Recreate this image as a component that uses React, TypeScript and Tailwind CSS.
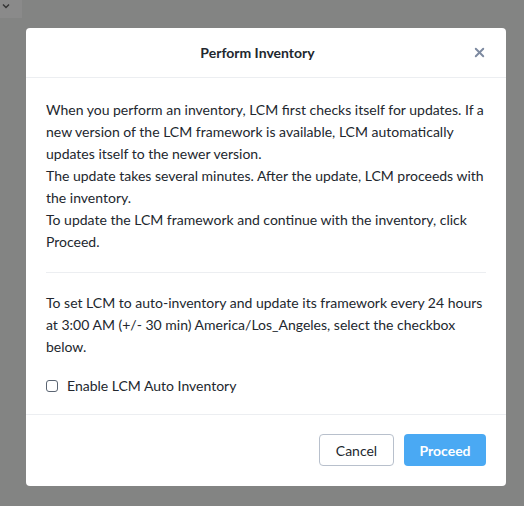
import { X } from 'lucide-react';

export default function App() {
  return (
    <div className="relative min-h-[506px] w-full bg-[#838483] pt-[28px] pl-[26px] font-['Lato','Noto_Sans',sans-serif] text-[14px] text-[#22272e]">
      {/* page behind the overlay */}
      <div className="absolute left-0 top-0 flex h-[18px] w-[22px] items-start justify-start bg-[#8a8a8a] pl-[2px]">
        <svg width="8" height="6" viewBox="0 0 8 6" className="mt-[3px]">
          <path d="M1 1.5 L4 4.5 L7 1.5" fill="none" stroke="#333" strokeWidth="1.4" />
        </svg>
      </div>

      <div className="relative w-[480px] rounded-[4px] bg-white">
        {/* header */}
        <div className="relative flex h-[50px] items-center justify-center border-b border-[#eceef1] pr-[17px]">
          <h2 className="text-[14px] font-bold text-[#22272e]">Perform Inventory</h2>
          <button type="button" className="absolute right-[19px] top-[17px] text-[#7d8aa0]" aria-label="Close">
            <X className="h-[15px] w-[15px]" strokeWidth={3} />
          </button>
        </div>

        {/* body */}
        <div className="px-[20px] pt-[21px] pb-[17px] leading-[22px]">
          <p>
            When you perform an inventory, LCM first checks itself for updates. If a new version of the LCM framework is
            available, LCM automatically updates itself to the newer version.
          </p>
          <p>The update takes several minutes. After the update, LCM proceeds with the inventory.</p>
          <p>To update the LCM framework and continue with the inventory, click Proceed.</p>

          <div className="my-[19px] border-t border-[#eceef1]" />

          <p>
            To set LCM to auto-inventory and update its framework every 24 hours at 3:00 AM (+/- 30 min)
            America/Los_Angeles, select the checkbox below.
          </p>

          <label className="mt-[17px] flex items-center gap-[9px]">
            <span className="h-[12px] w-[12px] rounded-[3px] border border-[#5b6573] bg-white" />
            <span>Enable LCM Auto Inventory</span>
          </label>
        </div>

        {/* footer */}
        <div className="flex justify-end gap-[10px] border-t border-[#eceef1] px-[20px] pt-[19px] pb-[20px]">
          <button
            type="button"
            className="h-[32px] w-[75px] rounded-[4px] border border-[#b8c0cc] bg-white text-[14px] text-[#22272e]"
          >
            Cancel
          </button>
          <button
            type="button"
            className="h-[32px] w-[82px] rounded-[4px] bg-[#4aa9f3] text-[14px] font-bold text-white"
          >
            Proceed
          </button>
        </div>
      </div>
    </div>
  );
}
